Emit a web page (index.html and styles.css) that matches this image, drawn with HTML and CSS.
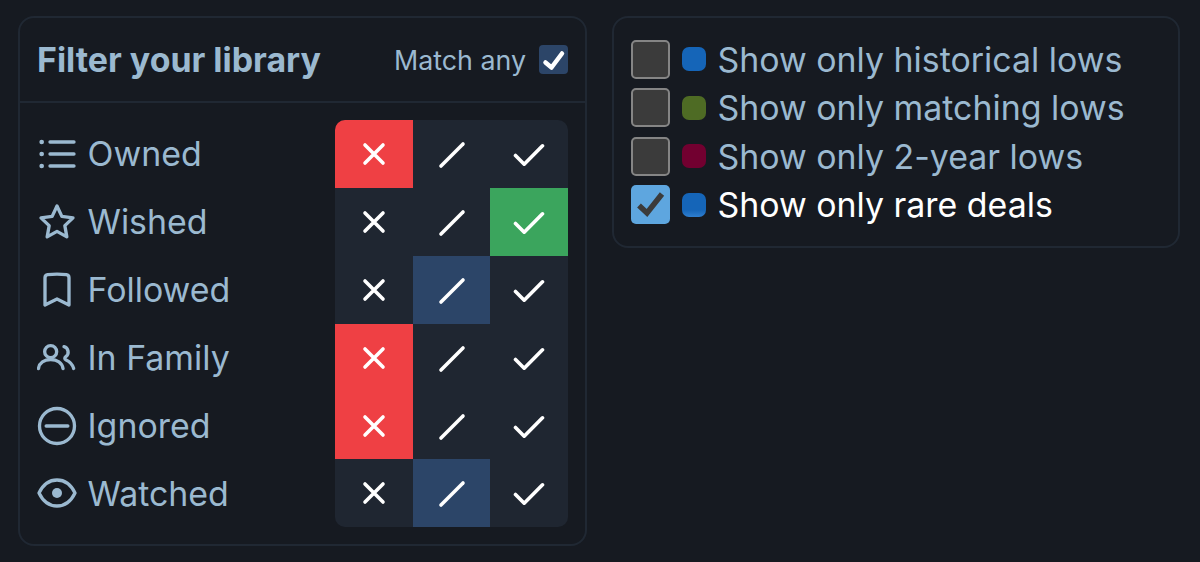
FILE: index.html
```html
<!DOCTYPE html>
<html lang="en">
<head>
    <meta charset="UTF-8">
    <title>Filter your library</title>
    <link rel="stylesheet" href="styles.css">
</head>
<body>
    <div class="card library-card">
        <div class="card-header">
            <h2>Filter your library</h2>
            <label class="match-any">
                Match any
                <span class="match-box">
                    <svg viewBox="0 0 29 29"><path d="M6.500 17.500l6 5L23 8.500"/></svg>
                </span>
            </label>
        </div>
        <div class="card-body">
            <ul class="filter-names">
                <li>
                    <svg class="row-icon" viewBox="0 0 24 24"><path d="M7.800 4.800h14.400M7.800 12h14.400M7.800 19.200h14.400"/><path class="dot" d="M2.800 4.800h.01M2.800 12h.01M2.800 19.200h.01"/></svg>
                    Owned
                </li>
                <li>
                    <svg class="row-icon" viewBox="0 0 24 24"><path d="M12 2.400l2.900 6.200 6.700.9-4.900 4.700 1.200 6.700L12 17.600l-5.900 3.300 1.200-6.700-4.900-4.700 6.700-.9z"/></svg>
                    Wished
                </li>
                <li>
                    <svg class="row-icon" viewBox="0 0 24 24"><path d="M17.600 2.800c.9.100 1.600.9 1.600 1.800V21L12 17.400 4.800 21V4.600c0-.9.700-1.700 1.600-1.800a50 50 0 0 1 11.200 0z"/></svg>
                    Followed
                </li>
                <li>
                    <svg class="row-icon" viewBox="0 0 24 24"><circle cx="8.200" cy="8.200" r="3.600"/><path d="M.9 18.300c.5-3.400 3.500-5.400 7.300-5.400s6.800 2 7.400 5.400"/><path d="M16.200 5.200a3.400 3.400 0 0 1 1.100 6c-.9.700-.8 1.500.2 2 2.200 1 3.800 2.700 4.500 5.100"/></svg>
                    In Family
                </li>
                <li>
                    <svg class="row-icon" viewBox="0 0 24 24"><circle cx="12" cy="12" r="10.500"/><path d="M5.500 12h13"/></svg>
                    Ignored
                </li>
                <li>
                    <svg class="row-icon" viewBox="0 0 24 24"><path d="M1.200 12C3.700 6.800 7.300 4.200 12 4.200s8.300 2.600 10.800 7.800c-2.500 5.200-6.100 7.800-10.800 7.800S3.700 17.200 1.200 12z"/><circle class="pupil" cx="12" cy="12" r="3"/></svg>
                    Watched
                </li>
            </ul>
            <div class="filter-grid" id="filter-grid"></div>
        </div>
    </div>

    <div class="card deals-card">
        <label class="deal-row">
            <span class="deal-box"></span><span class="swatch swatch-blue"></span>Show only historical lows
        </label>
        <label class="deal-row">
            <span class="deal-box"></span><span class="swatch swatch-green"></span>Show only matching lows
        </label>
        <label class="deal-row">
            <span class="deal-box"></span><span class="swatch swatch-red"></span>Show only 2-year lows
        </label>
        <label class="deal-row checked">
            <span class="deal-box">
                <svg viewBox="0 0 39 39"><path d="M8 20.500l8 7.500L31 9"/></svg>
            </span><span class="swatch swatch-rare"></span>Show only rare deals
        </label>
    </div>

    <script>
        // index of the selected cell in each row: 0 = exclude, 1 = neutral, 2 = include
        const rows = [0, 2, 1, 0, 0, 1];
        const glyphs = [
            '<path d="M7 7l18 18M25 7L7 25"/>',
            '<path d="M6 28L28 6"/>',
            '<path d="M2.500 17.500l8.700 8.700L29.500 7.800"/>'
        ];
        const active = ['on-red', 'on-blue', 'on-green'];

        document.getElementById('filter-grid').innerHTML = rows.map(sel =>
            glyphs.map((g, i) => `<div class="cell ${i === sel ? active[i] : ''}"><svg viewBox="0 0 32 32">${g}</svg></div>`).join('')
        ).join('');
    </script>
</body>
</html>
```

FILE: styles.css
```css
* { box-sizing: border-box; }
html, body { height: 100%; }
body { margin: 0; background-color: #161a21; font-family: "Inter", "Liberation Sans", sans-serif; color: #9bb9d0; display: flex; align-items: flex-start; gap: 25px; padding: 16px 20px 16px 18px; overflow: hidden; }
.card { border: 2px solid #202833; border-radius: 16px; }
.library-card { width: 569px; height: 530px; }
.card-header { height: 85px; border-bottom: 2px solid #202833; display: flex; align-items: center; justify-content: space-between; padding: 0 17px; }
.card-header h2 { margin: 0; font-size: 33.900px; font-weight: 700; color: #9bb9d0; }
.match-any { display: flex; align-items: center; gap: 13px; font-size: 26.800px; }
.match-box { width: 29px; height: 29px; background-color: #2c4568; border-radius: 4px; display: block; }
.match-box svg { display: block; fill: none; stroke: #fff; stroke-width: 4.500; stroke-linecap: round; stroke-linejoin: round; }
.card-body { display: flex; justify-content: space-between; padding: 17px 17px 0; }
.filter-names { list-style: none; margin: 0; padding: 0; }
.filter-names li { height: 67.900px; display: flex; align-items: center; gap: 10.500px; font-size: 33.900px; }
.row-icon { width: 40px; height: 40px; fill: none; stroke: #9bb9d0; stroke-width: 2; stroke-linecap: round; stroke-linejoin: round; }
.row-icon .dot { stroke-width: 2.800; }
.row-icon .pupil { fill: #9bb9d0; stroke: none; }
.filter-grid { width: 233px; display: grid; grid-template-columns: repeat(3, 1fr); grid-auto-rows: 67.900px; background-color: #1f2631; border-radius: 10px; overflow: hidden; }
.cell { display: flex; align-items: center; justify-content: center; }
.cell svg { width: 32px; height: 32px; fill: none; stroke: #fff; stroke-width: 3.600; stroke-linecap: round; stroke-linejoin: round; }
.on-red { background-color: #ef4044; }
.on-blue { background-color: #2c4568; }
.on-green { background-color: #3ba55d; }
.deals-card { width: 568px; height: 232px; padding: 17px; display: flex; flex-direction: column; }
.deal-row { height: 48.500px; flex: none; display: flex; align-items: center; font-size: 33.900px; }
.deal-box { width: 39px; height: 39px; flex: none; background-color: #3b3b3b; border: 2px solid #858585; border-radius: 5px; margin-right: 12px; }
.swatch { width: 24px; height: 24px; flex: none; border-radius: 7px; margin-right: 11.500px; }
.swatch-blue { background-color: #1565b8; }
.swatch-green { background-color: #4e6b24; }
.swatch-red { background-color: #720030; }
.swatch-rare { background: linear-gradient(#1565b8 70%, #2f7fd0); }
.deal-row.checked { color: #fff; }
.deal-row.checked .deal-box { background-color: #5ea6df; border: none; }
.deal-box svg { display: block; fill: none; stroke: #3b3b3b; stroke-width: 5.500; }
```
